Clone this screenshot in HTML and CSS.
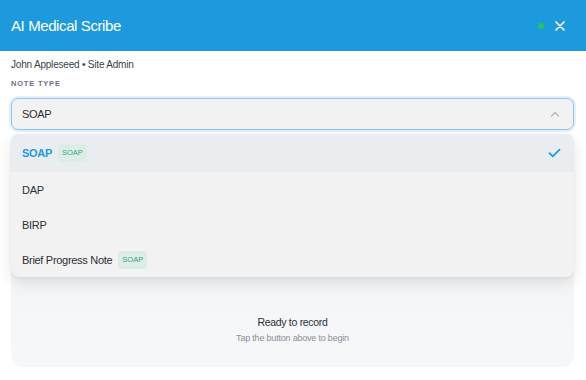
FILE: index.html
```html
<!DOCTYPE html>
<html lang="en">
<head>
    <meta charset="UTF-8">
    <meta name="viewport" content="width=device-width, initial-scale=1.0">
    <title>AI Medical Scribe</title>
    <link rel="stylesheet" href="styles.css">
</head>
<body>
    <div class="app-header">
        <span class="app-title">AI Medical Scribe</span>
        <div class="header-actions">
            <span class="status-dot"></span>
            <button class="btn-close" aria-label="Close">
                <svg width="10" height="10" viewBox="0 0 10 10">
                    <path d="M1 1 L9 9 M9 1 L1 9" stroke="#ffffff" stroke-width="1.7" stroke-linecap="round"/>
                </svg>
            </button>
        </div>
    </div>
    <div class="app-body">
        <div class="user-line">John Appleseed • Site Admin</div>
        <div class="field-label">NOTE TYPE</div>
        <div class="select-wrap">
            <div class="select-box">
                <span>SOAP</span>
                <svg class="chevron" width="10" height="6" viewBox="0 0 10 6">
                    <path d="M1.5 5 L5 1.5 L8.5 5" fill="none" stroke="#b3b8c0" stroke-width="1.4" stroke-linecap="round" stroke-linejoin="round"/>
                </svg>
            </div>
            <div class="select-menu">
                <div class="menu-item selected">
                    <span class="item-name">SOAP</span>
                    <span class="badge">SOAP</span>
                    <svg class="check" width="13" height="10" viewBox="0 0 13 10">
                        <path d="M1.5 5.2 L4.8 8.4 L11.5 1.6" fill="none" stroke="#1e9ade" stroke-width="1.8" stroke-linecap="round" stroke-linejoin="round"/>
                    </svg>
                </div>
                <div class="menu-item"><span class="item-name">DAP</span></div>
                <div class="menu-item"><span class="item-name">BIRP</span></div>
                <div class="menu-item">
                    <span class="item-name">Brief Progress Note</span>
                    <span class="badge">SOAP</span>
                </div>
            </div>
        </div>
        <div class="record-card">
            <div class="record-title">Ready to record</div>
            <div class="record-sub">Tap the button above to begin</div>
        </div>
    </div>
</body>
</html>
```

FILE: styles.css
```css
body {
    margin: 0;
    font-family: 'Liberation Sans', Arial, sans-serif;
    background-color: #ffffff;
    color: #2b2f36;
}
.app-header {
    height: 51px;
    background-color: #1d9ade;
    display: flex;
    align-items: center;
    justify-content: space-between;
    padding: 0 21px 0 11px;
}
.app-title {
    color: #ffffff;
    font-size: 15px;
    letter-spacing: -0.4px;
}
.header-actions {
    display: flex;
    align-items: center;
    gap: 11px;
}
.status-dot {
    width: 6px;
    height: 6px;
    border-radius: 50%;
    background-color: #22c55e;
}
.btn-close {
    border: none;
    background: none;
    padding: 0;
    width: 10px;
    height: 10px;
    display: flex;
    cursor: pointer;
}
.app-body {
    padding: 6px 12px 0 11px;
}
.user-line {
    font-size: 10px;
    line-height: 16px;
    letter-spacing: -0.2px;
    color: #3a3f47;
}
.field-label {
    margin-top: 5px;
    font-size: 7.5px;
    line-height: 12px;
    font-weight: bold;
    letter-spacing: 0.8px;
    color: #6b7280;
}
.select-wrap {
    position: relative;
    margin-top: 8px;
}
.select-box {
    height: 30px;
    border: 1px solid #8cc6ee;
    border-radius: 7px;
    background-color: #f2f2f2;
    box-shadow: 0 0 0 2px #e3f1fb;
    display: flex;
    align-items: center;
    justify-content: space-between;
    padding: 0 13px 0 10px;
    font-size: 11px;
    letter-spacing: -0.3px;
    color: #2b2f36;
}
.select-menu {
    position: absolute;
    top: 36px;
    left: 0;
    right: 0;
    background-color: #f2f2f2;
    border-radius: 8px;
    overflow: hidden;
    box-shadow: 0 6px 16px rgba(0, 0, 0, 0.10), 0 1px 3px rgba(0, 0, 0, 0.06);
    z-index: 2;
}
.menu-item {
    height: 35px;
    display: flex;
    align-items: center;
    gap: 6px;
    padding: 0 13px 0 11px;
    font-size: 11px;
    letter-spacing: -0.3px;
    color: #2b2f36;
}
.menu-item.selected {
    height: 38px;
    background-color: #eaedf0;
}
.menu-item.selected .item-name {
    color: #1d9ade;
    font-weight: bold;
}
.badge {
    font-size: 7.5px;
    line-height: 10px;
    letter-spacing: 0;
    color: #3aa57c;
    background-color: #dcece6;
    padding: 4px 4px;
    border-radius: 3px;
}
.check {
    margin-left: auto;
}
.record-card {
    margin-top: 6px;
    height: 231px;
    border-radius: 12px;
    background: linear-gradient(#f2f3f5, #f6f7f9);
    display: flex;
    flex-direction: column;
    align-items: center;
    justify-content: flex-end;
    padding-bottom: 22px;
    box-sizing: border-box;
}
.record-title {
    font-size: 10.5px;
    line-height: 16px;
    letter-spacing: -0.3px;
    color: #2b2f36;
}
.record-sub {
    margin-top: 1px;
    font-size: 9px;
    line-height: 14px;
    letter-spacing: -0.2px;
    color: #8a8f98;
}
```
